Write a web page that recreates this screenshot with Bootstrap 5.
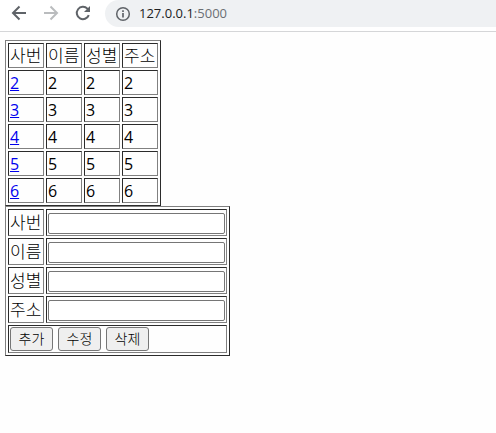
<!DOCTYPE html>
<html lang="ko">
<head>
<meta charset="utf-8">
<meta name="viewport" content="width=device-width, initial-scale=1">
<title>127.0.0.1:5000</title>
<link href="https://cdn.jsdelivr.net/npm/bootstrap@5.3.0/dist/css/bootstrap.min.css" rel="stylesheet">
<style>
body { font: 300 17px/21px "Open Sans", "Noto Sans CJK KR", sans-serif; color: #000; background: #fefefe; }
.toolbar { height: 32px; padding: 0 0 5px 10px; gap: 14px; border-bottom: 1px solid #d5d6d8; background: #fff; }
.tool { width: 18px; height: 18px; color: #5f6368; }
.tool:disabled { color: #babcbe; opacity: 1; }
.address { height: 27px; margin-left: -1px; padding-left: 10px; gap: 8px; background: #eff1f3; border-radius: 14px 0 0 14px; font-size: 13px; font-weight: 400; color: #202124; }
.address svg { color: #5f6368; }
.port { color: #6b6f74; }
.content { padding: 8px 5px; }
.grid { border: 1px solid; border-color: #808080 #2b2b2b #2b2b2b #808080; border-collapse: separate; border-spacing: 2px; }
.grid th, .grid td { border: 1px solid; border-color: #2b2b2b #808080 #808080 #2b2b2b; padding: 1px; font-weight: 300; text-align: left; vertical-align: middle; }
.grid th, .list td { min-width: 36px; height: 25px; white-space: nowrap; }
.list td { padding-top: 2px; padding-bottom: 0; font-size: 16px; font-weight: 400; }
.list a { color: #00e; }
.form-grid .entry { height: 27px; padding-top: 3px; }
.entry input { width: 177px; height: 21px; border: 1px solid #767676; border-radius: 2px; padding: 1px 2px; font-size: 13px; background: #fff; }
.actions { gap: 5px; }
.action { width: 43px; height: 24px; padding: 0; border: 1px solid #767676; border-radius: 3px; background: #efefef; color: #000; font-size: 14px; font-weight: 300; line-height: 20px; }
</style>
<script src="https://cdn.jsdelivr.net/npm/bootstrap@5.3.0/dist/js/bootstrap.bundle.min.js"></script>
</head>
<body>
<header class="toolbar d-flex align-items-center">
  <button class="tool btn p-0 border-0 d-flex" type="button" aria-label="뒤로"><svg width="18" height="18" viewBox="0 0 18 18" fill="none" stroke="currentColor" stroke-width="2"><path d="M16 9H3.500M9.500 2.500 3 9l6.500 6.500"/></svg></button>
  <button class="tool btn p-0 border-0 d-flex" type="button" aria-label="앞으로" disabled><svg width="18" height="18" viewBox="0 0 18 18" fill="none" stroke="currentColor" stroke-width="2"><path d="M2 9h12.500M8.500 2.500 15 9l-6.500 6.500"/></svg></button>
  <button class="tool btn p-0 border-0 d-flex" type="button" aria-label="새로고침"><svg width="18" height="18" viewBox="0 0 18 18" fill="none" stroke="currentColor" stroke-width="2"><path d="M14.800 11.200A6.200 6.200 0 1 1 13.400 4.600L15 6.200"/><path d="M16 2v6h-6z" fill="currentColor" stroke="none"/></svg></button>
  <div class="address d-flex align-items-center flex-grow-1 align-self-start">
    <svg width="16" height="16" viewBox="0 0 16 16" fill="none" stroke="currentColor"><circle cx="8" cy="8" r="6.300" stroke-width="1.500"/><path d="M8 7v4.500M8 4.200v1.700" stroke-width="1.700"/></svg>
    <span>127.0.0.1<span class="port">:5000</span></span>
  </div>
</header>
<main class="content">
  <table class="grid list">
    <thead><tr><th scope="col">사번</th><th scope="col">이름</th><th scope="col">성별</th><th scope="col">주소</th></tr></thead>
    <tbody>
      <tr><td><a href="#2">2</a></td><td>2</td><td>2</td><td>2</td></tr>
      <tr><td><a href="#3">3</a></td><td>3</td><td>3</td><td>3</td></tr>
      <tr><td><a href="#4">4</a></td><td>4</td><td>4</td><td>4</td></tr>
      <tr><td><a href="#5">5</a></td><td>5</td><td>5</td><td>5</td></tr>
      <tr><td><a href="#6">6</a></td><td>6</td><td>6</td><td>6</td></tr>
    </tbody>
  </table>
  <form>
    <table class="grid form-grid">
      <tbody>
        <tr><th scope="row"><label for="number">사번</label></th><td class="entry"><input class="d-block" type="text" id="number"></td></tr>
        <tr><th scope="row"><label for="name">이름</label></th><td class="entry"><input class="d-block" type="text" id="name"></td></tr>
        <tr><th scope="row"><label for="gender">성별</label></th><td class="entry"><input class="d-block" type="text" id="gender"></td></tr>
        <tr><th scope="row"><label for="address">주소</label></th><td class="entry"><input class="d-block" type="text" id="address"></td></tr>
        <tr><td colspan="2"><div class="actions d-flex"><button class="action" type="button">추가</button><button class="action" type="button">수정</button><button class="action" type="button">삭제</button></div></td></tr>
      </tbody>
    </table>
  </form>
</main>
</body>
</html>
